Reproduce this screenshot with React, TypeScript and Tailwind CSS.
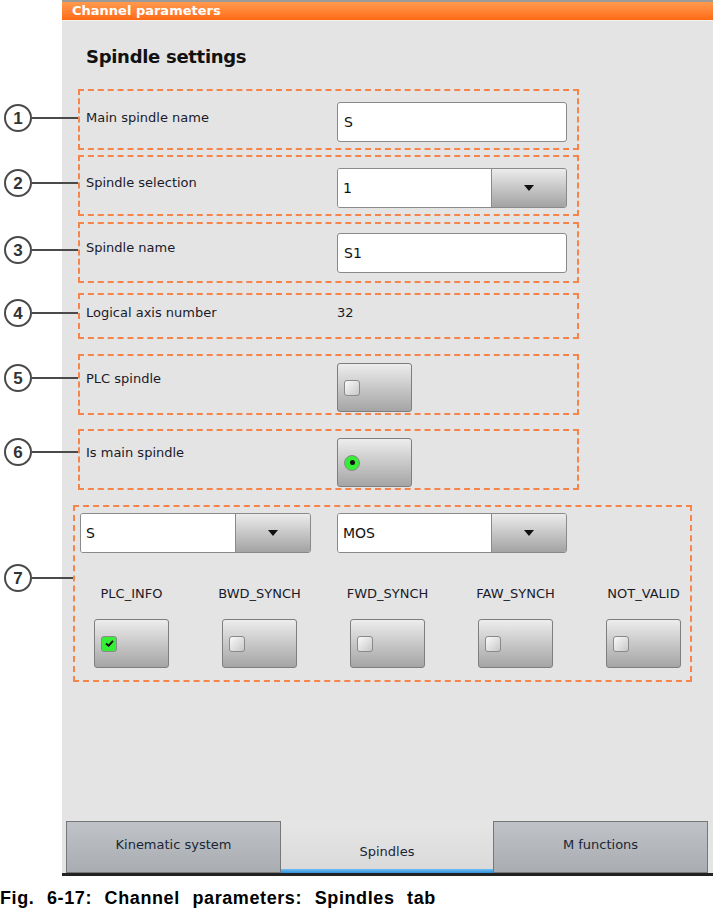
import React from "react";

const ui = { fontFamily: '"DejaVu Sans", Verdana, sans-serif' };

function Callout({ n, wide = false }: { n: number; wide?: boolean }) {
  return (
    <div className={wide ? "w-[73px] flex items-center pl-[4px]" : "w-[78px] flex items-center pl-[4px]"}>
      <div
        className="w-[28px] h-[28px] shrink-0 rounded-full border-2 border-[#4a4a4a] bg-white flex items-center justify-center text-[17px] font-bold text-[#333] leading-none"
        style={{ fontFamily: '"Liberation Sans", Arial, sans-serif' }}
      >
        {n}
      </div>
      <div className="flex-1 h-[2px] bg-[#4a4a4a]" />
    </div>
  );
}

function Triangle() {
  return (
    <svg width="10" height="6" viewBox="0 0 10 6">
      <polygon points="0,0 10,0 5,6" fill="#111" />
    </svg>
  );
}

function TextInput({ value }: { value: string }) {
  return (
    <div className="w-[230px] h-[40px] bg-white border border-[#8a8a8a] rounded-[3px] flex items-center pl-[6px] text-[14px] text-[#111]">
      {value}
    </div>
  );
}

function Dropdown({ value, w = "w-[230px]" }: { value: string; w?: string }) {
  return (
    <div className={`${w} h-[40px] border border-[#8a8a8a] rounded-[3px] flex overflow-hidden`}>
      <div className="flex-1 bg-white flex items-center pl-[5px] text-[14px] text-[#111]">{value}</div>
      <div className="w-[75px] border-l border-[#8a8a8a] bg-linear-to-b from-[#ececec] to-[#a3a3a3] flex items-center justify-center">
        <Triangle />
      </div>
    </div>
  );
}

function ToggleBox({ children }: { children: React.ReactNode }) {
  return (
    <div className="w-[75px] h-[49px] border border-[#7e7e7e] rounded-[3px] bg-linear-to-b from-[#ededed] to-[#a5a5a5] flex items-center pl-[6px]">
      {children}
    </div>
  );
}

function CheckBox({ checked = false }: { checked?: boolean }) {
  if (checked) {
    return (
      <div className="w-[16px] h-[16px] rounded-[3px] border border-[#8a8a8a] bg-[#36ee36] flex items-center justify-center">
        <svg width="9" height="7" viewBox="0 0 10 8">
          <path d="M1 4 L4 6.5 L9 1" stroke="#111" strokeWidth="2.2" fill="none" />
        </svg>
      </div>
    );
  }
  return <div className="w-[16px] h-[16px] rounded-[3px] border border-[#8a8a8a] bg-linear-to-br from-[#fafafa] to-[#c8c8c8]" />;
}

function Radio() {
  return (
    <div className="w-[16px] h-[16px] rounded-full border border-[#8a8a8a] bg-[#36ee36] flex items-center justify-center">
      <div className="w-[5px] h-[5px] rounded-full bg-[#111]" />
    </div>
  );
}

const BOX = "w-[501px] border-2 border-dashed border-[#f7844a] flex items-start";

export default function App() {
  const flags = [
    { label: "PLC_INFO", checked: true },
    { label: "BWD_SYNCH", checked: false },
    { label: "FWD_SYNCH", checked: false },
    { label: "FAW_SYNCH", checked: false },
    { label: "NOT_VALID", checked: false },
  ];
  return (
    <div className="w-[713px] h-[913px] bg-white overflow-hidden" style={ui}>
      <div className="ml-[62px] h-[876px] bg-[#e4e4e4] flex flex-col">
        {/* header */}
        <div className="border-t-2 border-[#9a9a9a] h-[20px] bg-linear-to-b from-[#ff9a4c] to-[#ff6a10] flex items-center pl-[10px] text-white font-bold text-[13px]">
          Channel parameters
        </div>
        <div className="h-[1px] bg-[#f2f2f2]" />

        <div className="flex-1 flex flex-col text-[13px] text-[#1a1a2a]">
          <div className="mt-[24px] ml-[24px] text-[18px] leading-[24px] font-bold tracking-[-0.3px] text-[#111]">Spindle settings</div>

          {/* row 1 */}
          <div className="-ml-[62px] mt-[20px] flex items-start">
            <div className="mt-[15px]"><Callout n={1} /></div>
            <div className={`${BOX} h-[61px]`}>
              <div className="w-[257px] pl-[6px] mt-[18px] leading-[18px]">Main spindle name</div>
              <div className="mt-[11px]"><TextInput value="S" /></div>
            </div>
          </div>

          {/* row 2 */}
          <div className="-ml-[62px] mt-[5px] flex items-start">
            <div className="mt-[14px]"><Callout n={2} /></div>
            <div className={`${BOX} h-[61px]`}>
              <div className="w-[257px] pl-[6px] mt-[17px] leading-[18px]">Spindle selection</div>
              <div className="mt-[11px]"><Dropdown value="1" /></div>
            </div>
          </div>

          {/* row 3 */}
          <div className="-ml-[62px] mt-[6px] flex items-start">
            <div className="mt-[14px]"><Callout n={3} /></div>
            <div className={`${BOX} h-[61px]`}>
              <div className="w-[257px] pl-[6px] mt-[15px] leading-[18px]">Spindle name</div>
              <div className="mt-[9px]"><TextInput value="S1" /></div>
            </div>
          </div>

          {/* row 4 */}
          <div className="-ml-[62px] mt-[10px] flex items-start">
            <div className="mt-[6px]"><Callout n={4} /></div>
            <div className={`${BOX} h-[46px]`}>
              <div className="w-[257px] pl-[6px] mt-[9px] leading-[18px]">Logical axis number</div>
              <div className="mt-[9px] leading-[18px]">32</div>
            </div>
          </div>

          {/* row 5 */}
          <div className="-ml-[62px] mt-[15px] flex items-start">
            <div className="mt-[10px]"><Callout n={5} /></div>
            <div className={`${BOX} h-[61px]`}>
              <div className="w-[257px] pl-[6px] mt-[14px] leading-[18px]">PLC spindle</div>
              <div className="mt-[7px]">
                <ToggleBox><CheckBox /></ToggleBox>
              </div>
            </div>
          </div>

          {/* row 6 */}
          <div className="-ml-[62px] mt-[14px] flex items-start">
            <div className="mt-[9px]"><Callout n={6} /></div>
            <div className={`${BOX} h-[61px]`}>
              <div className="w-[257px] pl-[6px] mt-[13px] leading-[18px]">Is main spindle</div>
              <div className="mt-[7px]">
                <ToggleBox><Radio /></ToggleBox>
              </div>
            </div>
          </div>

          {/* row 7 */}
          <div className="-ml-[62px] mt-[15px] flex items-start">
            <div className="mt-[59px]"><Callout n={7} wide /></div>
            <div className="w-[619px] h-[177px] border-2 border-dashed border-[#f7844a] flex flex-col">
              <div className="flex items-start pl-[5px] pt-[6px] gap-[26px]">
                <Dropdown value="S" w="w-[231px]" />
                <Dropdown value="MOS" />
              </div>
              <div className="flex pl-[19px] gap-[53px] mt-[32px]">
                {flags.map((f) => (
                  <div key={f.label} className="w-[75px] flex flex-col items-center">
                    <div className="leading-[18px] whitespace-nowrap">{f.label}</div>
                    <div className="mt-[16px]">
                      <ToggleBox><CheckBox checked={f.checked} /></ToggleBox>
                    </div>
                  </div>
                ))}
              </div>
            </div>
          </div>
        </div>

        {/* tabs */}
        <div className="h-[52px] flex items-stretch pl-[4px] text-[13px] text-[#1a2636]">
          <div className="w-[215px] border border-[#777] bg-linear-to-b from-[#bfc3c7] to-[#a9adb1] flex items-start justify-center pt-[13px]">
            Kinematic system
          </div>
          <div className="w-[212px] flex flex-col bg-linear-to-b from-[#e6e6e6] to-[#d9d9d9]">
            <div className="flex-1 flex items-start justify-center pt-[21px]">Spindles</div>
            <div className="h-[4px] bg-linear-to-b from-[#6fc0f5] to-[#2f8fd8]" />
          </div>
          <div className="w-[215px] border border-[#777] bg-linear-to-b from-[#bfc3c7] to-[#a9adb1] flex items-start justify-center pt-[13px]">
            M functions
          </div>
        </div>
        <div className="h-[3px] bg-[#222]" />
      </div>
      <div
        className="mt-[12px] text-[18px] leading-[20px] font-bold text-black whitespace-nowrap tracking-[0.6px] [word-spacing:7px]"
        style={{ fontFamily: '"Liberation Sans", Arial, sans-serif' }}
      >
        Fig. 6-17: Channel parameters: Spindles tab
      </div>
    </div>
  );
}
